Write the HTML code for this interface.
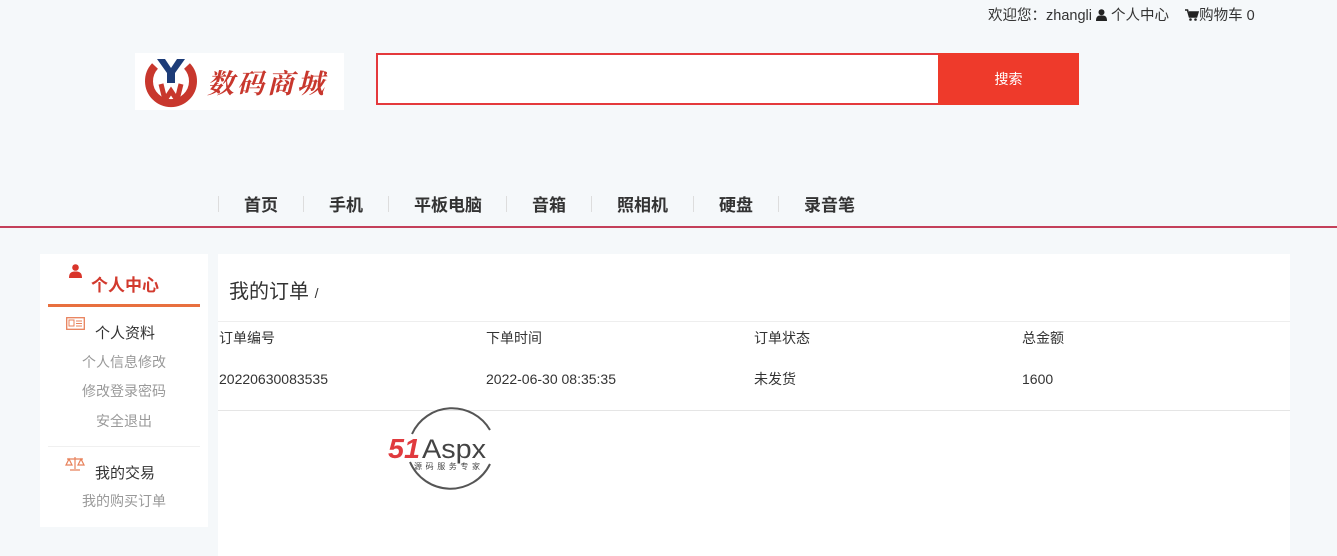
<!DOCTYPE html><html><head><meta charset="utf-8"><style>
body{margin:0;width:1337px;height:556px;background:#f5f8fa;font-family:"Liberation Sans","Noto Sans CJK SC",sans-serif;position:relative;overflow:hidden;color:#333}
.a{position:absolute;white-space:nowrap}
.nav{font-size:17px;font-weight:bold;color:#333;top:191px}
.sep{position:absolute;top:196px;width:1px;height:16px;background:#ddd}
.s{font-size:14px;color:#999;width:168px;text-align:center;left:40px}
.c{font-size:14px;color:#333}
</style></head><body>
<div class="a" style="left:988px;top:4px;font-size:14.5px;color:#333">欢迎您：zhangli <svg width="11" height="12" viewBox="0 0 11 12" style="vertical-align:-1px"><circle cx="5.5" cy="3.2" r="3" fill="#222"/><path d="M0 12 C0 7 2 6.5 5.5 6.5 C9 6.5 11 7 11 12Z" fill="#222"/></svg> 个人中心 &nbsp;&nbsp;&nbsp;<svg width="14" height="12" viewBox="0 0 14 12" style="vertical-align:-1px"><path d="M0 1h2.5l2 7h7l1.5-5H4" fill="none" stroke="#222" stroke-width="1.6"/><path d="M4 3h9l-1.5 5h-7z" fill="#222"/><circle cx="5.5" cy="10.5" r="1.3" fill="#222"/><circle cx="10.5" cy="10.5" r="1.3" fill="#222"/></svg>购物车 0</div>
<div class="a" style="left:135px;top:53px;width:209px;height:57px;background:#fff"></div>
<svg class="a" style="left:143px;top:56px" width="56" height="52" viewBox="0 0 56 52"><path d="M12 10 A22 22 0 1 0 44 10" fill="none" stroke="#c8372d" stroke-width="8"/><path d="M14 3 L22 3 L28 12 L34 3 L42 3 L32 17 L32 27 L24 27 L24 17Z" fill="#1d3c78"/><path d="M18 28 L22 44 L28 35 L34 44 L38 28" fill="none" stroke="#c8372d" stroke-width="5"/></svg>
<div class="a" style="left:207px;top:62px;font-size:27px;color:#c8372d;font-family:'Noto Serif CJK SC',serif;font-weight:bold;letter-spacing:3px;font-style:italic">数码商城</div>
<div class="a" style="left:376px;top:53px;width:560px;height:48px;border:2px solid #e4393c;background:#fff"></div>
<div class="a" style="left:938px;top:53px;width:141px;height:52px;background:#ee3a2b;color:#fff;font-size:14px;text-align:center;line-height:52px">搜索</div>
<div class="sep" style="left:218px"></div><div class="sep" style="left:303px"></div><div class="sep" style="left:388px"></div><div class="sep" style="left:506px"></div><div class="sep" style="left:591px"></div><div class="sep" style="left:693px"></div><div class="sep" style="left:778px"></div>
<div class="a nav" style="left:244px">首页</div><div class="a nav" style="left:329px">手机</div><div class="a nav" style="left:414px">平板电脑</div><div class="a nav" style="left:532px">音箱</div><div class="a nav" style="left:617px">照相机</div><div class="a nav" style="left:719px">硬盘</div><div class="a nav" style="left:804px">录音笔</div>
<div class="a" style="left:0;top:226px;width:1337px;height:2px;background:#c4405a"></div>
<div class="a" style="left:40px;top:254px;width:168px;height:273px;background:#fff"></div>
<svg class="a" style="left:69px;top:264px" width="13" height="14" viewBox="0 0 13 14"><circle cx="6.5" cy="3.5" r="3.3" fill="#d9352b"/><path d="M0 14 C0 8.5 2.5 7.5 6.5 7.5 C10.5 7.5 13 8.5 13 14Z" fill="#d9352b"/></svg>
<div class="a" style="left:91px;top:271px;font-size:17px;font-weight:bold;color:#d23a2e">个人中心</div>
<div class="a" style="left:48px;top:304px;width:152px;height:3px;background:#e8703f"></div>
<svg class="a" style="left:66px;top:317px" width="19" height="13" viewBox="0 0 19 13"><rect x=".7" y=".7" width="17.6" height="11.6" fill="none" stroke="#e8815a" stroke-width="1.3"/><rect x="3" y="3" width="5" height="6" fill="none" stroke="#e8815a"/><path d="M10 4h6M10 6.5h6M10 9h6" stroke="#e8815a"/></svg>
<div class="a c" style="left:95px;top:322px;font-size:15px">个人资料</div>
<div class="a s" style="top:352px">个人信息修改</div>
<div class="a s" style="top:381px">修改登录密码</div>
<div class="a s" style="top:411px">安全退出</div>
<div class="a" style="left:48px;top:446px;width:152px;height:1px;background:#f0f0f0"></div>
<svg class="a" style="left:65px;top:456px" width="20" height="15" viewBox="0 0 20 15"><path d="M10 1v12M5 14h10M2 3h16M4 3L1 9h6zM16 3l-3 6h6z" fill="none" stroke="#e8815a" stroke-width="1.2"/></svg>
<div class="a c" style="left:95px;top:462px;font-size:15px">我的交易</div>
<div class="a s" style="top:491px">我的购买订单</div>
<div class="a" style="left:218px;top:254px;width:1072px;height:302px;background:#fff"></div>
<div class="a" style="left:229px;top:275px;font-size:20px;color:#333">我的订单 <span style="font-size:14px">/</span></div>
<div class="a" style="left:218px;top:321px;width:1072px;height:1px;background:#eee"></div>
<div class="a c" style="left:219px;top:328px">订单编号</div><div class="a c" style="left:486px;top:328px">下单时间</div><div class="a c" style="left:754px;top:328px">订单状态</div><div class="a c" style="left:1022px;top:328px">总金额</div>
<div class="a c" style="left:219px;top:371px">20220630083535</div><div class="a c" style="left:486px;top:371px">2022-06-30 08:35:35</div><div class="a c" style="left:754px;top:369px">未发货</div><div class="a c" style="left:1022px;top:371px">1600</div>
<div class="a" style="left:218px;top:410px;width:1072px;height:1px;background:#e5e5e5"></div>
<svg class="a" style="left:386px;top:402px" width="128" height="92" viewBox="0 0 128 92"><path d="M26 32 A44 44 0 0 1 104 28" fill="none" stroke="#555" stroke-width="2"/><path d="M104 62 A44 44 0 0 1 24 60" fill="none" stroke="#555" stroke-width="2"/><text x="2" y="56" font-size="28" font-weight="bold" font-style="italic" fill="#e03a3e" font-family="Liberation Sans" textLength="32" lengthAdjust="spacingAndGlyphs">51</text><text x="36" y="56" font-size="27" fill="#444" font-family="Liberation Sans" textLength="64" lengthAdjust="spacingAndGlyphs">Aspx</text><text x="28" y="67" font-size="8" fill="#444" font-family="Noto Sans CJK SC" textLength="66">源码服务专家</text></svg>
</body></html>
